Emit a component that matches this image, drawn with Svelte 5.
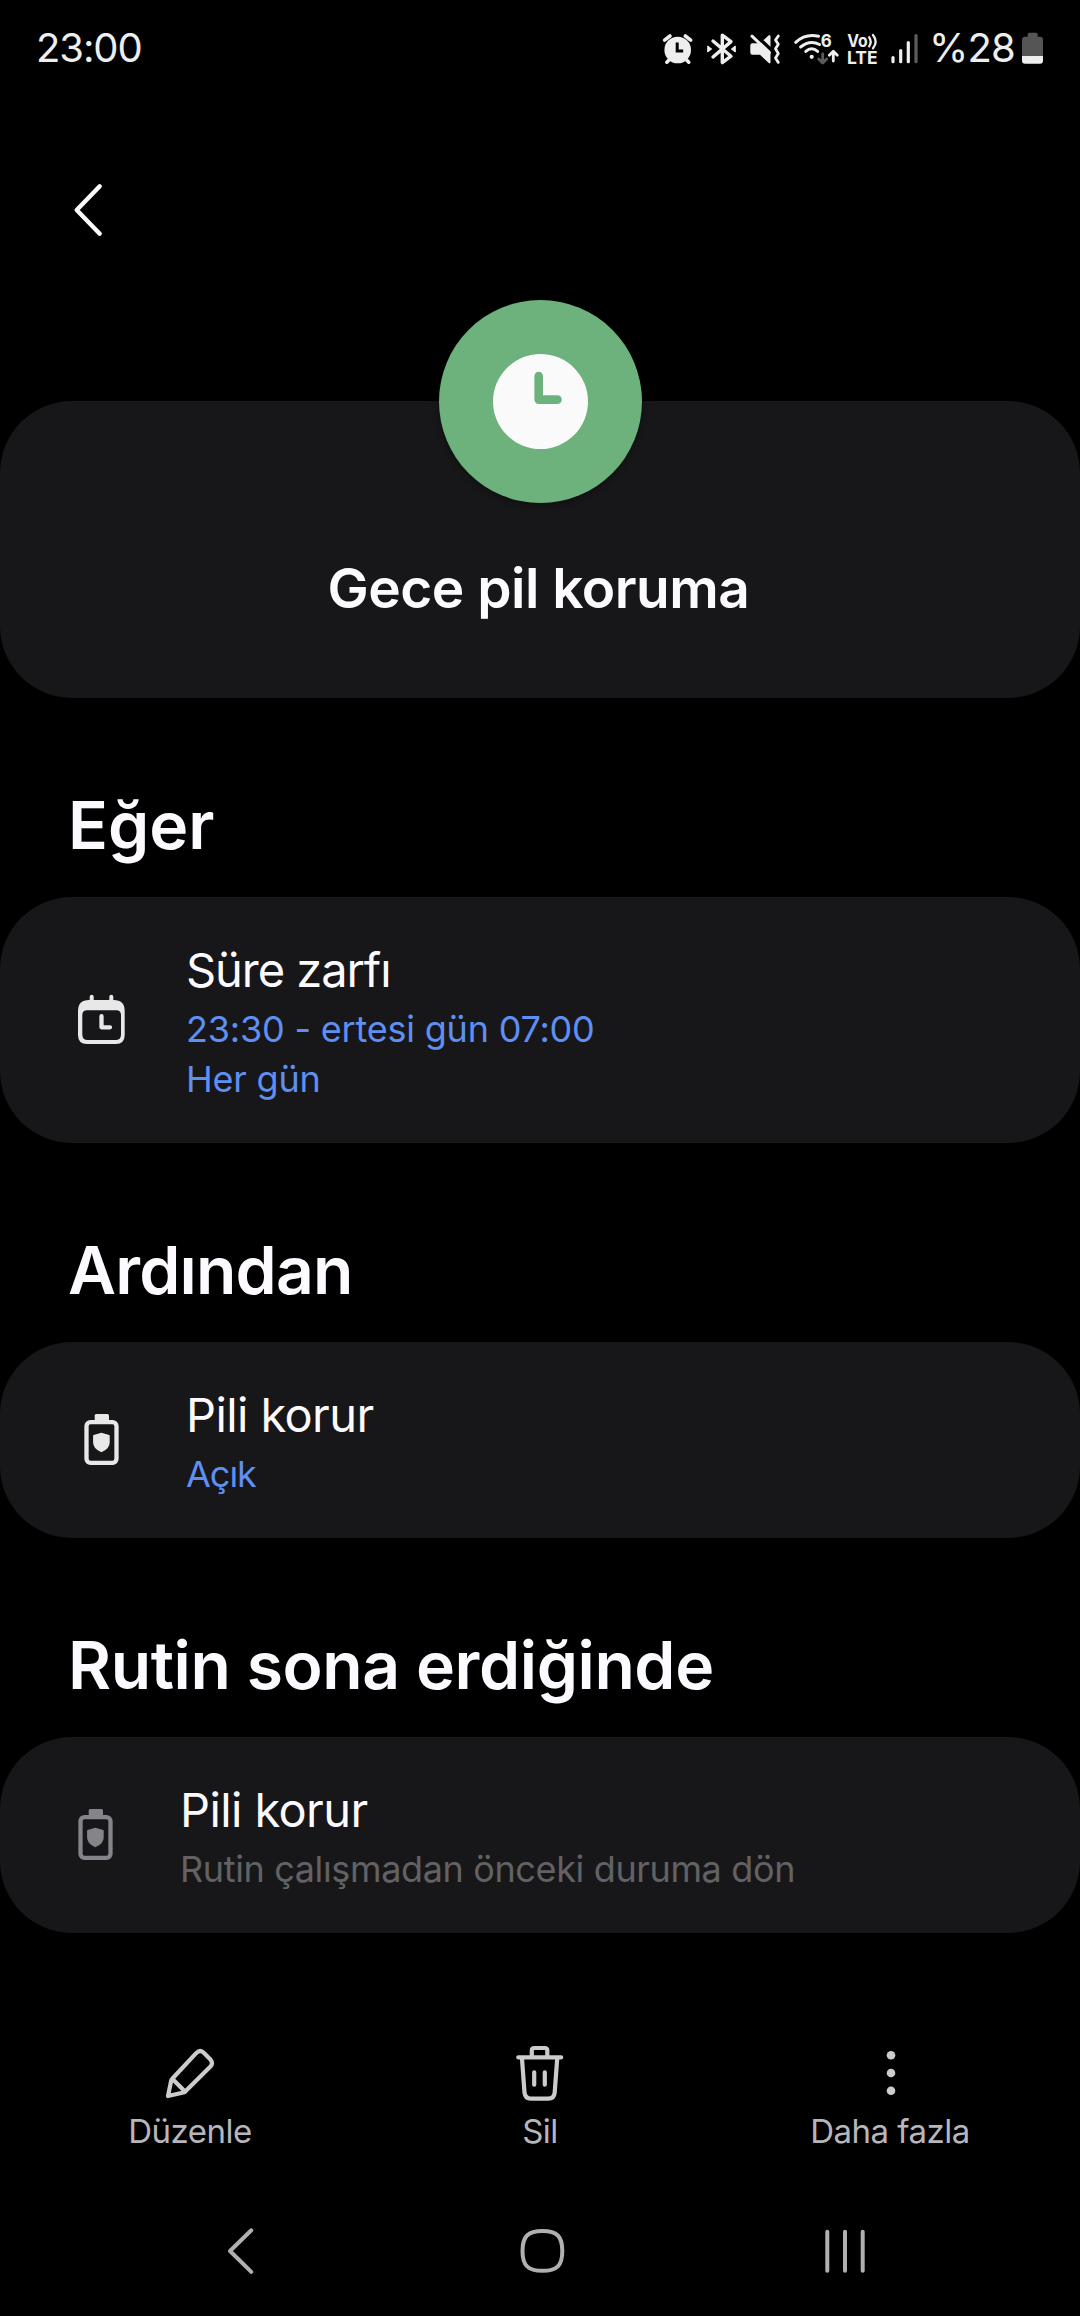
<script>
  const sections = [
    {
      heading: "Eğer",
      headingSpacing: 0,
      icon: "calendar",
      title: "Süre zarfı",
      titleSpacing: -1.05,
      lines: [
        { text: "23:30 - ertesi gün 07:00", spacing: -0.2 },
        { text: "Her gün", spacing: -0.2 },
      ],
      muted: false,
    },
    {
      heading: "Ardından",
      headingSpacing: -0.8,
      icon: "battery",
      title: "Pili korur",
      titleSpacing: -0.6,
      lines: [{ text: "Açık", spacing: -1 }],
      muted: false,
    },
    {
      heading: "Rutin sona erdiğinde",
      headingSpacing: -0.4,
      icon: "battery",
      title: "Pili korur",
      titleSpacing: -0.6,
      lines: [{ text: "Rutin çalışmadan önceki duruma dön", spacing: -0.36 }],
      muted: true,
    },
  ];

  const bars = [
    { x: 4, y: 27.5 },
    { x: 11.7, y: 20.5 },
    { x: 19.3, y: 12.5 },
    { x: 27, y: 5.5, off: true },
  ];
</script>

<div class="screen">
  <header class="status">
    <span class="time">23:00</span>
    <div class="indicators">
      <!-- alarm -->
      <svg width="45" height="36" viewBox="0 0 45 36">
        <circle cx="17.7" cy="20" r="13.3" fill="#eee" />
        <path class="line" d="M4.6 10.2 10 6M25.3 6l5.4 4.2M10 29l-3.2 3.2M25.6 29l3.2 3.2" stroke-width="3.6" />
        <path d="M17.2 12.5V21h6" fill="none" stroke="#000" stroke-width="3" />
      </svg>
      <!-- bluetooth -->
      <svg width="43" height="36" viewBox="0 0 43 36">
        <path class="line" d="M8 11 26 26.2 17.3 32.6V5.2L26 11.6 8 27" stroke-width="3.4" />
        <path d="M2.7 16v6l4-3zM30.3 16v6l-4-3z" fill="#eee" stroke="#eee" />
      </svg>
      <!-- muted, vibrating -->
      <svg width="44" height="36" viewBox="0 0 44 36">
        <path d="M4.5 13.3H12L20.5 5.5Q22.5 4 22.5 6.5V32Q22.5 34.500 20.5 32.7L12 24.800H4.5Q2.3 24.800 2.3 22.6V15.5Q2.3 13.3 4.5 13.3Z" fill="#eee" />
        <path d="M4 1.8 24 20.5" stroke="#000" stroke-width="3.4" />
        <path class="line" d="M4 6.2 21.3 22.5" stroke-width="3" />
        <path class="line" d="M30.3 6 27.5 10l2.8 4.3-2.8 4.5 2.8 4.6-2.8 4.6 2.8 4.4" stroke-width="2.8" />
      </svg>
      <!-- wifi 6 -->
      <svg width="54" height="36" viewBox="0 0 54 36">
        <path class="line" d="M3.7 12.3Q13.5 3.2 26.5 6.2M8.6 17Q18 9.3 27.5 14.5M13.8 21.4Q19.7 16.2 25.6 21.4" stroke-width="3" />
        <circle cx="19.7" cy="26.8" r="2.1" fill="#eee" />
        <text x="28.8" y="17" font-size="17.5" textLength="11" lengthAdjust="spacingAndGlyphs">6</text>
        <path class="line dim" d="M30.7 24v8.500M26.700 29l4 4 4-4" stroke-width="2.8" />
        <path class="line" d="M41.3 31V21.5M37.3 25.2l4-4 4 4" stroke-width="2.8" />
      </svg>
      <!-- VoLTE -->
      <svg width="43" height="36" viewBox="0 0 43 36">
        <text x="1.3" y="17" font-size="17.5" textLength="20.5" lengthAdjust="spacingAndGlyphs">Vo</text>
        <path class="line" d="M23.2 7.3Q26.2 11.8 23.2 16.3M27 5Q32.2 11.8 27 18.3" stroke-width="2.3" />
        <text x="1" y="34" font-size="17.5" textLength="30.500" lengthAdjust="spacingAndGlyphs">LTE</text>
      </svg>
      <!-- signal -->
      <svg width="40" height="36" viewBox="0 0 40 36">
        {#each bars as bar}
          <path class="line" class:dim={bar.off} d="M{bar.x} {bar.y}V31.7" stroke-width="3.2" />
        {/each}
      </svg>
      <span class="percent">%28</span>
      <svg width="25" height="36" viewBox="0 0 25 36">
        <path d="M7.7 4.2q0-1.5 1.5-1.5h7q1.5 0 1.5 1.5v2.5h2.3q3 0 3 3V26H2V9.7q0-3 3-3h2.7z" fill="#555" />
        <path d="M2 26h21v4.7q0 3-3 3H5q-3 0-3-3z" fill="#eee" />
      </svg>
    </div>
  </header>

  <div class="appbar">
    <button class="back" aria-label="Geri">
      <svg width="60" height="60" viewBox="0 0 60 60">
        <path d="M39.7 6.3 16.7 30l23 23.7" fill="none" stroke="#fcfcff" stroke-width="4.4" stroke-linecap="round" stroke-linejoin="round" />
      </svg>
    </button>
  </div>

  <div class="hero">
    <div class="badge">
      <svg width="95" height="95" viewBox="0 0 95 95">
        <circle cx="47.5" cy="47.5" r="47.5" fill="#fafafa" />
        <path d="M45.7 22V45.6H64.5" fill="none" stroke="#6db17c" stroke-width="8.6" stroke-linecap="round" stroke-linejoin="round" />
      </svg>
    </div>
    <h1>Gece pil koruma</h1>
  </div>

  {#each sections as section}
    <h2 style:letter-spacing="{section.headingSpacing}px">{section.heading}</h2>
    <div class="card" class:muted={section.muted}>
      {#if section.icon === "calendar"}
        <svg width="60" height="60" viewBox="0 0 60 60">
          <path d="M19.7 6.700v8M39.3 6.700v8" stroke="currentColor" stroke-width="4" stroke-linecap="round" />
          <path
            fill="currentColor"
            fill-rule="evenodd"
            d="M17 10H41.7Q52.7 10 52.7 21V45Q52.7 54 43.7 54H15Q6 54 6 45V21Q6 10 17 10ZM15 20.3Q10.3 20.3 10.3 25V44.5Q10.3 50 15.8 50H43.5Q49 50 49 44.5V25Q49 20.3 44.3 20.3Z"
          />
          <path d="M29.5 26.2V37.3H38" fill="none" stroke="currentColor" stroke-width="4.3" stroke-linecap="round" stroke-linejoin="round" />
        </svg>
      {:else}
        <svg width="60" height="60" viewBox="0 0 60 60">
          <rect x="14.5" y="12.2" width="30" height="40.6" rx="4" fill="none" stroke="currentColor" stroke-width="4.3" />
          <path d="M22.7 12V5.5q0-1.5 1.5-1.5h11.3q1.5 0 1.5 1.5V12z" fill="currentColor" />
          <path d="M29.4 22.7 37.2 25q.5.2.5.7v6.8q0 6.3-8.3 9.8-8.3-3.5-8.3-9.8v-6.8q0-.5.5-.7z" fill="currentColor" />
        </svg>
      {/if}
      <div class="text">
        <div class="title" style:letter-spacing="{section.titleSpacing}px">{section.title}</div>
        {#each section.lines as line}
          <div class="line-text" style:letter-spacing="{line.spacing}px">{line.text}</div>
        {/each}
      </div>
    </div>
  {/each}

  <div class="actions">
    <button>
      <svg width="60" height="60" viewBox="0 0 60 60">
        <path d="M12.5 35.5 36.4 9.9Q40.2 6.2 44 9.9L50.2 16.2Q53.8 20 50.2 23.8L25.5 48.3Q24.7 49.2 23.5 49.5L8 53 11.2 37.5Q11.5 36.4 12.5 35.5ZM12.5 36 25 48.5" />
      </svg>
      <span>Düzenle</span>
    </button>
    <button>
      <svg width="60" height="60" viewBox="0 0 60 60">
        <path d="M8.2 14.3H51.2M21.8 14.3V7.5Q21.8 5 24.3 5H34.8Q37.3 5 37.3 7.5V14.3M11.9 14.3 14.5 49.5Q15 55.6 21 55.6H38.2Q44.2 55.6 44.7 49.5L47.3 14.3M24.2 29.3V41.7M34.8 29.3V41.7" />
      </svg>
      <span>Sil</span>
    </button>
    <button>
      <svg width="60" height="60" viewBox="0 0 60 60">
        <g fill="#ccccce" stroke="none">
          <circle cx="31" cy="12.3" r="4.3" />
          <circle cx="31" cy="30" r="4.3" />
          <circle cx="31" cy="47.7" r="4.3" />
        </g>
      </svg>
      <span>Daha fazla</span>
    </button>
  </div>

  <nav>
    <svg width="60" height="60" viewBox="0 0 60 60">
      <path d="M41.3 9.3 20 30l21.3 20.9" />
    </svg>
    <svg width="60" height="60" viewBox="0 0 60 60">
      <path d="M29.5 10C44 10 49.3 15.3 49.3 29.9S44 49.800 29.5 49.800 9.5 44.500 9.5 29.9 15 10 29.5 10Z" />
    </svg>
    <svg width="60" height="60" viewBox="0 0 60 60">
      <path d="M12.3 10.700V49.700M30 10.700V49.700M47.7 10.700V49.700" />
    </svg>
  </nav>
</div>

<style>
  :global(body) {
    background: #000;
  }
  .screen {
    width: 1080px;
    height: 2316px;
    overflow: hidden;
    background: #000;
    color: #fcfaff;
    font-family: Inter, Roboto, sans-serif;
  }
  svg {
    display: block;
    flex: none;
    overflow: visible;
  }
  button {
    background: none;
    border: none;
    padding: 0;
    font: inherit;
    color: inherit;
  }
  .status {
    height: 96px;
    padding: 0 35px 0 36px;
    display: flex;
    align-items: center;
    justify-content: space-between;
    font-size: 40px;
    line-height: 96px;
    color: #eee;
  }
  .time {
    letter-spacing: -1.1px;
  }
  .indicators {
    display: flex;
    align-items: center;
  }
  .percent {
    width: 91px;
    letter-spacing: -0.8px;
  }
  .line {
    fill: none;
    stroke: #eee;
    stroke-linecap: round;
    stroke-linejoin: round;
  }
  .line.dim {
    stroke: #5c5c5c;
  }
  .status text {
    fill: #eee;
    font-weight: 700;
  }
  .appbar {
    height: 305px;
    padding: 84px 60px 0;
    box-sizing: border-box;
  }
  .hero,
  .card {
    background: #171719;
    border-radius: 72px;
  }
  .hero {
    position: relative;
    height: 297px;
    padding-top: 155px;
    box-sizing: border-box;
    text-align: center;
  }
  .badge {
    position: absolute;
    top: -101px;
    left: 439px;
    width: 203px;
    height: 203px;
    border-radius: 50%;
    background: #6db17c;
    box-shadow: 0 2px 7px rgba(0, 0, 0, 0.35);
    display: flex;
    align-items: center;
    justify-content: center;
  }
  h1 {
    margin: 0;
    padding-right: 3px;
    font-size: 55px;
    line-height: 64px;
    font-weight: 600;
    letter-spacing: -0.5px;
  }
  h2 {
    margin: 0;
    padding: 87px 68px 32px;
    font-size: 66px;
    line-height: 80px;
    font-weight: 600;
  }
  .card {
    display: flex;
    align-items: center;
    gap: 54px;
    padding: 43px 72px 39px;
  }
  .card svg {
    color: #e8e8e8;
    position: relative;
    top: -2px;
  }
  .card.muted {
    padding-left: 66px;
  }
  .card.muted svg {
    color: #85848a;
  }
  .title {
    font-size: 47px;
    line-height: 60px;
    margin-bottom: 4px;
  }
  .line-text {
    font-size: 36px;
    line-height: 50px;
    color: #5f8ff2;
  }
  .muted .line-text {
    color: #626264;
  }
  .actions {
    margin-top: 110px;
    padding: 0 15px;
    display: grid;
    grid-template-columns: repeat(3, 1fr);
  }
  .actions button {
    display: flex;
    flex-direction: column;
    align-items: center;
    gap: 8px;
    font-size: 33px;
    line-height: 40px;
    letter-spacing: -0.5px;
    color: #b7b6bc;
  }
  .actions svg {
    fill: none;
    stroke: #ccccce;
    stroke-width: 4.2;
    stroke-linecap: round;
    stroke-linejoin: round;
  }
  nav {
    margin-top: 70px;
    padding: 0 205px 0 210px;
    display: flex;
    justify-content: space-between;
  }
  nav svg {
    fill: none;
    stroke: #b0b0b0;
    stroke-width: 4;
    stroke-linecap: round;
    stroke-linejoin: round;
  }
</style>
